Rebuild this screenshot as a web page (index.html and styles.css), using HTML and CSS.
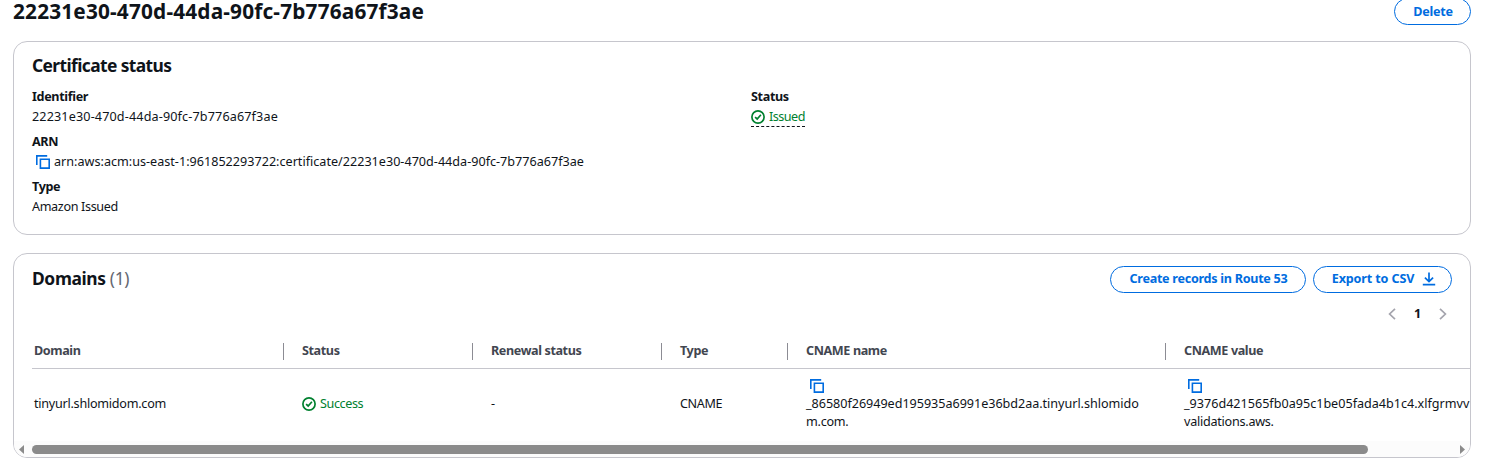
FILE: index.html
```html
<!DOCTYPE html>
<html lang="en">
<head>
<meta charset="utf-8">
<title>Certificate details</title>
<link rel="stylesheet" href="styles.css">
</head>
<body>
<svg class="defs" aria-hidden="true">
  <symbol id="copy" viewBox="0 0 14 14"><path d="M.8 10V.9h10.4M4.4 4.2h8.8v8.9H4.4z" fill="none" stroke="currentColor" stroke-width="1.6"/></symbol>
  <symbol id="check" viewBox="0 0 14 14"><circle cx="7" cy="7" r="6.1" fill="none" stroke="currentColor" stroke-width="1.7"/><path d="M4.1 7.1 6.2 9l3.7-4.2" fill="none" stroke="currentColor" stroke-width="1.7"/></symbol>
</svg>
<main class="page">
  <header class="page-header">
    <h1 class="title">22231e30-470d-44da-90fc-7b776a67f3ae</h1>
    <button class="button button-delete"><span>Delete</span></button>
  </header>

  <section class="panel status-panel">
    <h2 class="heading">Certificate status</h2>
    <div class="columns">
      <dl class="pairs">
        <dt class="label">Identifier</dt>
        <dd class="value uuid">22231e30-470d-44da-90fc-7b776a67f3ae</dd>
        <dt class="label">ARN</dt>
        <dd class="value arn"><svg class="icon copy"><use href="#copy"/></svg><span>arn:aws:acm:us-east-1:961852293722:certificate/22231e30-470d-44da-90fc-7b776a67f3ae</span></dd>
        <dt class="label">Type</dt>
        <dd class="value">Amazon Issued</dd>
      </dl>
      <dl class="pairs">
        <dt class="label">Status</dt>
        <dd class="value"><span class="state issued"><svg class="icon"><use href="#check"/></svg><span>Issued</span></span></dd>
      </dl>
    </div>
  </section>

  <section class="panel domains-panel">
    <div class="toolbar">
      <h2 class="heading">Domains <span class="count">(1)</span></h2>
      <div class="actions">
        <button class="button button-create"><span>Create records in Route 53</span></button>
        <button class="button button-export"><span>Export to CSV</span><svg class="icon" viewBox="0 0 14 14"><path d="M7 .5v9M2.9 5.7 7 9.6l4.1-3.9M.8 12.7h12.4" fill="none" stroke="currentColor" stroke-width="1.7"/></svg></button>
      </div>
    </div>
    <nav class="pagination">
      <svg class="arrow" viewBox="0 0 8 12"><path d="M7 .8 1.6 6 7 11.2"/></svg>
      <b class="current">1</b>
      <svg class="arrow" viewBox="0 0 8 12"><path d="M1 .8 6.4 6 1 11.2"/></svg>
    </nav>
    <div class="table">
      <div class="row head">
        <div class="cell">Domain</div><div class="cell">Status</div><div class="cell">Renewal status</div><div class="cell">Type</div><div class="cell">CNAME name</div><div class="cell">CNAME value</div>
      </div>
      <div class="row body">
        <div class="cell domain">tinyurl.shlomidom.com</div>
        <div class="cell"><span class="state"><svg class="icon"><use href="#check"/></svg><span>Success</span></span></div>
        <div class="cell">-</div>
        <div class="cell">CNAME</div>
        <div class="cell record name"><svg class="icon copy"><use href="#copy"/></svg><span>_86580f26949ed195935a6991e36bd2aa.tinyurl.shlomido</span><span>m.com.</span></div>
        <div class="cell record target"><svg class="icon copy"><use href="#copy"/></svg><span>_9376d421565fb0a95c1be05fada4b1c4.xlfgrmvv</span><span>validations.aws.</span></div>
      </div>
    </div>
    <div class="scrollbar">
      <svg class="scroll-arrow" viewBox="0 0 5 9"><path d="M5 0v9L0 4.5z"/></svg>
      <div class="track"><div class="thumb"></div></div>
      <svg class="scroll-arrow" viewBox="0 0 5 9"><path d="M0 0v9l5-4.5z"/></svg>
    </div>
  </section>
</main>
</body>
</html>
```
FILE: styles.css
```css
* { box-sizing: border-box; }
body {
  margin: 0;
  background: #fff;
  color: #0f141a;
  font: 12.6px/18px "Noto Sans", "Open Sans", sans-serif;
  letter-spacing: -0.35px;
  overflow: hidden;
}
h1, h2, dl, dd { margin: 0; }
.defs { position: absolute; width: 0; height: 0; }
.page { height: 471px; padding: 0 19px 0 13px; }
.page-header { display: flex; justify-content: space-between; height: 41px; }
.title { font-size: 20.8px; line-height: 22px; font-weight: 700; letter-spacing: 0.17px; }
.button {
  display: flex; align-items: center; justify-content: center; gap: 7px;
  height: 27px; padding: 0 0 1px; border: 1.5px solid #006ce0; border-radius: 14px;
  background: #fff; color: #006ce0;
  font: 700 12.6px/18px "Noto Sans", "Open Sans", sans-serif; letter-spacing: -0.28px;
  white-space: nowrap;
}
.button-delete { width: 77px; margin-top: -2px; padding: 1px 0 0 1px; }
.button-create { width: 196px; padding-left: 1px; }
.button-export { width: 139px; padding-left: 3px; gap: 8px; letter-spacing: -0.14px; }
.icon { width: 14px; height: 14px; flex: none; display: block; }
.copy { color: #006ce0; }
.panel { border: 1px solid #c6c6cd; border-radius: 14px; background: #fff; overflow: hidden; }
.status-panel { height: 194px; padding: 12px 18px; }
.heading { font-size: 17.4px; line-height: 22px; font-weight: 700; letter-spacing: -0.6px; }
.columns { display: grid; grid-template-columns: 719px 1fr; padding-top: 12px; }
.label { font-weight: 700; line-height: 18px; }
.value { height: 18px; margin: 2px 0 7px; white-space: nowrap; }
.uuid { letter-spacing: 0.14px; }
.arn { display: flex; align-items: center; gap: 4px; padding-left: 4px; letter-spacing: 0.01px; }
.state { display: inline-flex; align-items: center; gap: 4px; height: 18px; color: #00802f; }
.body .state { display: flex; letter-spacing: -0.4px; }
.issued { height: 19px; letter-spacing: -0.5px; border-bottom: 1px dashed #0f141a; }
.domains-panel { height: 205px; margin-top: 18px; display: flex; flex-direction: column; }
.toolbar { display: flex; justify-content: space-between; padding: 12px 18px 0; height: 50px; }
.toolbar .heading { line-height: 24px; letter-spacing: -0.36px; }
.count { color: #656871; font-weight: 400; }
.actions { display: flex; gap: 7px; }
.pagination { display: flex; align-items: center; justify-content: flex-end; height: 20px; padding-right: 23px; gap: 17.5px; }
.arrow { width: 8px; height: 12px; fill: none; stroke: #a4a4ad; stroke-width: 1.7; }
.current { width: 8px; text-align: center; }
.table { width: 1600px; padding-left: 18px; }
.row { display: grid; grid-template-columns: 251px 189px 189px 126px 378px 400px; align-items: center; }
.head { height: 45px; padding-top: 10px; border-bottom: 1px solid #c6c6cd; color: #424650; font-weight: 700; letter-spacing: -0.39px; }
.head .cell { height: 17px; line-height: 16px; padding-left: 18px; border-left: 1px solid #8c8c94; }
.head .cell:first-child, .body .cell:first-child { padding-left: 2px; border-left: 0; }
.body { height: 72px; padding-bottom: 2px; }
.body .cell { padding-left: 19px; }
.body .domain { letter-spacing: -0.25px; }
.record { display: flex; flex-direction: column; white-space: nowrap; }
.record .copy { margin: 2px 0 2px 4px; }
.name { letter-spacing: -0.03px; }
.target { letter-spacing: 0; }
.record span:last-child { letter-spacing: -0.25px; }
.scrollbar { display: flex; align-items: center; height: 16px; padding: 0 5px; gap: 8px; background: #fcfcfc; }
.scroll-arrow { width: 5px; height: 9px; fill: #8b8b8b; }
.track { flex: 1; }
.thumb { width: 1336px; height: 9px; border-radius: 5px; background: #8b8b8b; }
```
